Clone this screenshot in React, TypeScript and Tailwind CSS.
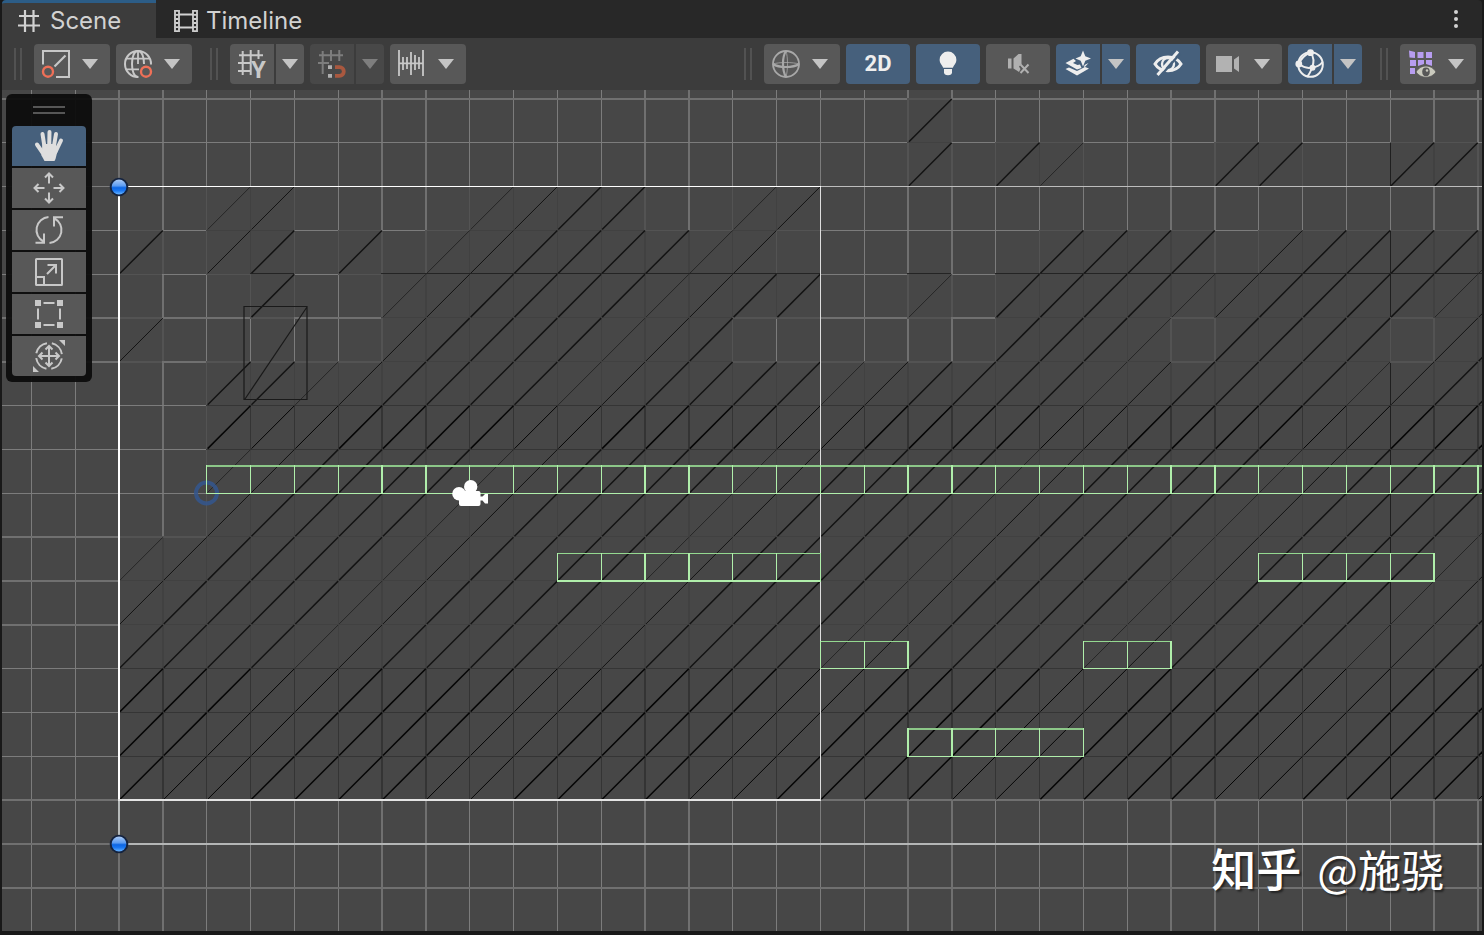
import type { ReactNode } from "react";

const CELL = 43.83;
const ORIGIN_X = 119;
const ORIGIN_Y = 99;
const COLS = 31;

/* Occupied tile columns per row, as inclusive ranges. */
const FULL: number[][] = [[0, 31]];
const FROM_TWO: number[][] = [[2, 31]];
const TILE_ROWS: number[][][] = [
  [[18, 18]],
  [[18, 18], [20, 21], [25, 26], [29, 30]],
  [[2, 3], [8, 11], [14, 15]],
  [[0, 0], [2, 3], [5, 5], [7, 14], [21, 24], [26, 31]],
  [[3, 3], [6, 15], [18, 18], [20, 31]],
  [[0, 0], [6, 13], [20, 23], [25, 28], [30, 31]],
  FROM_TWO,
  FROM_TWO,
  FROM_TWO,
  FROM_TWO,
  FULL,
  FULL,
  FULL,
  FULL,
  FULL,
  FULL,
];

const isTile = (c: number, r: number) =>
  (TILE_ROWS[r] ?? []).some(([from, to]) => c >= from && c <= to);

const wideCol = (n: number) => n >= 0 && n % 6 < 2;
const wideRow = (m: number) => [0, 5, 6, 10, 11, 12, 16, 17, 18].includes(m);
const gx = (n: number) => {
  const v = ORIGIN_X + CELL * n;
  return wideCol(n) ? Math.round(v) - 1 : Math.floor(v);
};
const gy = (m: number) => {
  const v = ORIGIN_Y + CELL * m;
  return wideRow(m) ? Math.round(v) - 1 : Math.floor(v);
};

const LIGHT = "#7c7c7c";
const LIGHT_WIDE = "#707070";
const EDGE = "#535353";
const DARK_ROWS = [7, 13, 14, 15];

function GridLines() {
  const out: ReactNode[] = [];
  for (let n = -2; n <= 60; n++) {
    const w = wideCol(n) ? 2 : 1;
    for (let m = -1; m <= 30; m++) {
      const a = isTile(n - 1, m);
      const b = isTile(n, m);
      let fill = w === 2 ? LIGHT_WIDE : LIGHT;
      if (a && b) fill = DARK_ROWS.includes(m) ? "#343434" : "#414141";
      else if (a || b) fill = EDGE;
      if (n === 29 && b) fill = "#1f1f1f";
      out.push(
        <rect key={`v${n}.${m}`} x={gx(n)} y={gy(m)} width={n === 29 && b ? 1 : w} height={gy(m + 1) - gy(m)} fill={fill} />,
      );
    }
  }
  for (let m = 0; m <= 30; m++) {
    const h = wideRow(m) ? 2 : 1;
    for (let n = -3; n <= 60; n++) {
      const a = isTile(n, m - 1);
      const b = isTile(n, m);
      let fill = h === 2 ? LIGHT_WIDE : LIGHT;
      if (a && b) fill = [7, 8, 13, 14, 15].includes(m) ? "#353535" : "#414141";
      else if ((a || b) && m !== 16) fill = EDGE;
      const dark = m === 4 && b;
      out.push(
        <rect
          key={`h${n}.${m}`}
          x={gx(n)}
          y={dark ? gy(m) - 1 : gy(m)}
          width={gx(n + 1) - gx(n)}
          height={a && b ? 1 : h}
          fill={dark ? "#242424" : fill}
        />,
      );
    }
  }
  return <g shapeRendering="crispEdges">{out}</g>;
}

function TileDiagonals() {
  const out: ReactNode[] = [];
  TILE_ROWS.forEach((_, r) => {
    for (let c = 0; c <= COLS; c++) {
      if (!isTile(c, r)) continue;
      const phase = (c + r) % 6;
      const black = DARK_ROWS.includes(r);
      const stroke = phase === 4 && !black ? "#262626" : black ? "#050505" : "#131313";
      const x = ORIGIN_X + CELL * c;
      const y = ORIGIN_Y + CELL * r;
      out.push(
        <line
          key={`${c}.${r}`}
          x1={x + 1}
          y1={y + CELL - 1}
          x2={x + CELL}
          y2={y}
          stroke={stroke}
          strokeWidth={phase === 4 || phase === 5 ? 1 : 1.5}
        />,
      );
    }
  });
  return <g>{out}</g>;
}

const PLATFORMS = [
  { from: 2, to: 32, top: 465, bottom: 493, topH: 2, bottomH: 1 },
  { from: 10, to: 16, top: 553, bottom: 580, topH: 1, bottomH: 2 },
  { from: 26, to: 30, top: 553, bottom: 580, topH: 1, bottomH: 2 },
  { from: 16, to: 18, top: 641, bottom: 668, topH: 1, bottomH: 1 },
  { from: 22, to: 24, top: 641, bottom: 668, topH: 1, bottomH: 1 },
  { from: 18, to: 22, top: 728, bottom: 756, topH: 2, bottomH: 1 },
];

function Colliders() {
  return (
    <g shapeRendering="crispEdges" fill="#b0efab">
      {PLATFORMS.map((p) => {
        const x = gx(p.from);
        const w = gx(p.to) - x;
        return (
          <g key={`${p.from}.${p.top}`}>
            <rect x={x} y={p.top} width={w} height={p.topH} fill={p.topH === 2 ? "#8cc788" : "#94d990"} />
            <rect x={x} y={p.bottom} width={w} height={p.bottomH} />
            {Array.from({ length: p.to - p.from + 1 }, (_, i) => p.from + i).map((n) => (
              <rect key={n} x={gx(n)} y={p.top} width={wideCol(n) ? 2 : 1} height={p.bottom + p.bottomH - p.top} />
            ))}
          </g>
        );
      })}
    </g>
  );
}

function Handle({ x, y }: { x: number; y: number }) {
  return (
    <g>
      <circle cx={x} cy={y} r="9.300" fill="#14233f" />
      <circle cx={x} cy={y} r="7.400" fill="url(#knob)" />
    </g>
  );
}

function SceneCanvas() {
  return (
    <svg className="absolute inset-0 h-full w-full" aria-label="Scene viewport" role="img">
      <defs>
        <linearGradient id="knob" x1="0" y1="0" x2="0" y2="1">
          <stop offset="0" stopColor="#a9c9f5" />
          <stop offset="0.42" stopColor="#5c9cf2" />
          <stop offset="0.55" stopColor="#0d66e4" />
          <stop offset="0.75" stopColor="#1b78f2" />
          <stop offset="1" stopColor="#69b4ff" />
        </linearGradient>
      </defs>
      <g transform="translate(-2 -90)">
        <GridLines />
        <TileDiagonals />
        <g shapeRendering="crispEdges">
          <rect x="119" y="186" width="4000" height="1" fill="#bdbdbd" />
          <rect x="119" y="186" width="702" height="1" fill="#ffffff" />
          <rect x="118" y="187" width="2" height="613" fill="#ffffff" />
          <rect x="118" y="800" width="2" height="44" fill="#b5b9b9" />
          <rect x="118" y="799" width="703" height="2" fill="#e4e4e4" />
          <rect x="820" y="187" width="1" height="613" fill="#dedede" />
          <rect x="118" y="843" width="4000" height="2" fill="#b4b6b6" />
        </g>
        <path d="M244 306.500H307V399.500H244Z M245 399L307 307" fill="none" stroke="#1a1a1a" strokeWidth="1.200" />
        <circle cx="206.500" cy="493" r="10.500" fill="none" stroke="#34578f" strokeOpacity="0.850" strokeWidth="4" />
        <Colliders />
        <g fill="#ffffff">
          <circle cx="459" cy="493.700" r="6.800" />
          <circle cx="470.700" cy="486.700" r="6.700" />
          <rect x="459" y="491" width="21.500" height="15" rx="2" />
          <path d="M480 496.500L482.500 496.500L485 494H488V503.500H485L482.500 500.500H480Z" />
        </g>
        <Handle x={119} y={187} />
        <Handle x={119} y={844} />
      </g>
    </svg>
  );
}

function Icon({ children, className = "text-[#c8c8c8]" }: { children: ReactNode; className?: string }) {
  return (
    <svg
      viewBox="0 0 28 28"
      className={`size-7 shrink-0 overflow-visible ${className}`}
      fill="none"
      stroke="currentColor"
      strokeWidth="2"
      aria-hidden="true"
    >
      {children}
    </svg>
  );
}

function Caret({ className = "text-[#c4c4c4]" }: { className?: string }) {
  return (
    <svg viewBox="0 0 16 10" className={`h-2.5 w-4 shrink-0 ${className}`} fill="currentColor" aria-hidden="true">
      <path d="M0 0H16L8 10Z" />
    </svg>
  );
}

function DropButton({ label, children }: { label: string; children: ReactNode }) {
  return (
    <button aria-label={label} className="flex h-10 items-center gap-3 rounded bg-[#585858] pr-3 pl-2">
      {children}
      <Caret />
    </button>
  );
}

function ToggleButton({ label, on, children }: { label: string; on: boolean; children: ReactNode }) {
  return (
    <button
      aria-label={label}
      aria-pressed={on}
      className={`flex h-10 w-16 items-center justify-center rounded ${on ? "bg-[#46607c]" : "bg-[#585858]"}`}
    >
      {children}
    </button>
  );
}

const splitTone = { on: "bg-[#46607c]", off: "bg-[#585858]", disabled: "bg-[#484848]" };

function SplitButton({ label, tone, children }: { label: string; tone: keyof typeof splitTone; children: ReactNode }) {
  return (
    <div className="flex gap-0.5">
      <button aria-label={label} disabled={tone === "disabled"} className={`flex h-10 w-11 items-center justify-center rounded-l ${splitTone[tone]}`}>
        {children}
      </button>
      <button
        aria-label={`${label} options`}
        disabled={tone === "disabled"}
        className={`flex h-10 w-7 items-center justify-center rounded-r ${splitTone[tone]}`}
      >
        <Caret className={tone === "disabled" ? "text-[#7e7e7e]" : "text-[#c4c4c4]"} />
      </button>
    </div>
  );
}

function Grip() {
  return <div className="mr-[6px] h-8 w-2 shrink-0 border-x-2 border-[#525252]" />;
}

function Toolbar() {
  return (
    <div className="flex h-[52px] items-center justify-between bg-[#3c3c3c] pr-[6px] pl-3" role="toolbar">
      <div className="flex items-center gap-[6px]">
        <Grip />
        <DropButton label="Tool pivot">
          <Icon>
            <path d="M1 14.500V1H27V27H14" />
            <path d="M12.500 16.500L23.500 5.500" strokeWidth="2.200" />
            <circle cx="6" cy="21.700" r="5" stroke="#ee7058" strokeWidth="2.400" />
          </Icon>
        </DropButton>
        <DropButton label="Handle rotation">
          <Icon>
            <path d="M27 14.500A13 13 0 1 0 14.500 27" />
            <path d="M20 14C20 7 18 1 14 1S8 7 8 14S10 27 14 27" />
            <path d="M2.500 8.700H25.500M2 19.300H15M14 1V14" strokeWidth="1.800" />
            <circle cx="22" cy="21.700" r="5" stroke="#ee7058" strokeWidth="2.400" />
          </Icon>
        </DropButton>
        <div className="pl-3">
          <Grip />
        </div>
        <SplitButton label="Grid visibility" tone="off">
          <Icon>
            <path d="M1 5.200H25M0 13H13.500M0 21H13M4.700 1V25M12.700 0V25M20.500 0V9" />
            <text
              x="20.500"
              y="27.500"
              textAnchor="middle"
              fill="currentColor"
              stroke="none"
              className="font-[Roboto,sans-serif] text-[24px] font-bold"
            >
              Y
            </text>
          </Icon>
        </SplitButton>
        <SplitButton label="Grid snapping" tone="disabled">
          <Icon className="text-[#7d7d7d]">
            <path d="M1 5.200H25M0 13H11M4.700 1V24M13 0V11M21.300 0V11" />
            <path d="M17 17.200H21.500A4.300 4.300 0 0 1 21.500 25.800H17" stroke="#a9583f" strokeWidth="3.800" />
            <path d="M10 17.200H14M10 25.800H14" stroke="#b0b0b0" strokeWidth="3.800" />
          </Icon>
        </SplitButton>
        <DropButton label="Increment snapping">
          <Icon>
            <path d="M1 0V26M25 0V26M1 13.300H25M5 7V20M9 7V19M13 2V25M17 5V20M21 7V19" strokeWidth="1.800" />
          </Icon>
        </DropButton>
      </div>

      <div className="flex items-center gap-[6px]">
        <Grip />
        <DropButton label="Draw mode">
          <Icon className="text-[#a8a8a8]">
            <circle cx="14" cy="14" r="13" strokeWidth="1.800" />
            <path d="M14 1C10 7 10 20 14 27M1 14C7 18 21 18 27 14" strokeWidth="2.200" />
            <path d="M14 1C16 7 16 20 14 27M1 14C7 12 21 12 27 14" strokeWidth="0.800" />
          </Icon>
        </DropButton>
        <ToggleButton label="2D" on>
          <span className="font-[Roboto,sans-serif] text-[22px] leading-7 font-bold text-[#eeeeee]">2D</span>
        </ToggleButton>
        <ToggleButton label="Scene lighting" on>
          <Icon className="text-[#eeeeee]">
            <g fill="currentColor" stroke="none">
              <path d="M14 1.500a8.400 8.400 0 0 0-8.400 8.400c0 3.400 2.400 4.800 3.600 7.800h9.600c1.200-3 3.600-4.400 3.600-7.800A8.400 8.400 0 0 0 14 1.500z" />
              <path d="M10 19h8v3.200a4 3 0 0 1-8 0z" />
            </g>
          </Icon>
        </ToggleButton>
        <ToggleButton label="Scene audio" on={false}>
          <Icon className="text-[#b0b0b0]">
            <path d="M4 8.500H7.500V18.500H4Z M9.500 8.500L14.500 4H17.500V14L15 16.500L16.500 19L15 22L9.500 18.500Z" fill="currentColor" stroke="none" />
            <path d="M16.500 14.500L24.500 23M24.500 14.500L16.500 23" />
          </Icon>
        </ToggleButton>
        <SplitButton label="Scene effects" tone="on">
          <Icon className="text-[#eeeeee]">
            <g fill="currentColor" stroke="none">
              <path d="M19 0.500L21.300 6.300L27 8.500L21.300 10.700L19 16.500L16.700 10.700L11.500 8.500L16.700 6.300Z" />
              <path d="M1.500 13L9.500 8.800L12 11L9 13L13.500 15L16 14.500L17.500 18L13 19.500Z M20.500 15L24.500 13L20 18Z" />
              <path d="M1.500 19L5 17.500L13 21L21 17L25 18.500L13 25.500Z" />
            </g>
          </Icon>
        </SplitButton>
        <ToggleButton label="Scene visibility" on>
          <Icon className="text-[#eeeeee]">
            <path d="M1 14C6.500 4.500 21.500 4.500 27 14C21.500 23 6.500 23 1 14Z" strokeWidth="3" />
            <circle cx="14" cy="14" r="6" strokeWidth="2.400" />
            <path d="M26.200 3.500L6 26.500" stroke="#46607c" strokeWidth="2.400" />
            <path d="M24 1.500L3.500 25" strokeWidth="3" />
          </Icon>
        </ToggleButton>
        <DropButton label="Scene camera">
          <Icon className="text-[#b2b2b2]">
            <path d="M2 6H18V22H2Z M20 9.500L25 6V22L20 18.500Z" fill="currentColor" stroke="none" />
          </Icon>
        </DropButton>
        <SplitButton label="Gizmos" tone="on">
          <Icon className="text-[#eeeeee]">
            <circle cx="14.500" cy="14.500" r="12.300" />
            <path d="M14.500 2C18 7 18 13 16 18C14 23 13 25 11 26.500M14.500 2C7 6 4 10 3 14C8 18 12 18.500 16 17.500C20 17 24 15.500 26.500 12" />
            <g fill="currentColor" stroke="none">
              <circle cx="14.500" cy="2.700" r="3.400" />
              <circle cx="2.800" cy="14" r="3.400" />
              <circle cx="16.500" cy="17.800" r="3" />
            </g>
          </Icon>
        </SplitButton>
        <div className="pl-3">
          <Grip />
        </div>
        <DropButton label="Tilemap focus">
          <Icon>
            <g fill="#b79df0" stroke="none">
              <path d="M1 0.500L7 2V8L1.500 7.500Z M9.500 2H15.500V8H9.500Z M18 2H24V8H18Z" />
              <path d="M2 10H8V16H2Z M10 10H16V14L10 16Z M18 10H24V16L18 14Z M2 18H7V24H2Z" />
            </g>
            <path d="M8 22C12.500 14 23.500 14 28 22C23.500 29 12.500 29 8 22Z" fill="#c9c9bd" stroke="#585858" strokeWidth="0.800" />
            <ellipse cx="18" cy="21.800" rx="3.800" ry="4.400" fill="#585858" stroke="none" />
            <circle cx="19" cy="20.500" r="1.200" fill="#c9c9bd" stroke="none" />
          </Icon>
        </DropButton>
      </div>
    </div>
  );
}

const arrows =
  "M14 9.500V0M10 3.500L14 -0.500L18 3.500M14 18.500V28M10 24.500L14 28.500L18 24.500M9.500 14H0M3.500 10L-0.500 14L3.500 18M18.500 14H28M24.500 10L28.500 14L24.500 18";

const TOOLS: { label: string; icon: ReactNode }[] = [
  {
    label: "Hand",
    icon: (
      <Icon className="text-[#dedede]">
        <path
          d="M7.500 2L9.500 15M14.500 0L14.200 15M21 2L18.800 15M26 8.500L20.500 20M2 12.500L8.500 22"
          strokeWidth="4"
          strokeLinecap="round"
        />
        <path d="M7.500 12H20.500L23 17L20.500 27L19.500 29H9.500L6.500 23.500Z" fill="currentColor" stroke="none" />
      </Icon>
    ),
  },
  { label: "Move", icon: <Icon><path d={arrows} /></Icon> },
  {
    label: "Rotate",
    icon: (
      <Icon>
        <path d="M13.500 1A13 13 0 0 0 8.500 25.500M9 17.500V26.700H0.500M14.500 27A13 13 0 0 0 19.500 2.500M19 10.500V1.300H28" />
      </Icon>
    ),
  },
  {
    label: "Scale",
    icon: (
      <Icon>
        <rect x="1" y="1" width="26" height="26" rx="0.500" />
        <path d="M1 19H9V27M12 16L20.500 7.500M12.500 7H21V15.500" />
      </Icon>
    ),
  },
  {
    label: "Rect",
    icon: (
      <Icon>
        <path d="M0 0H6V6H0Z M22 0H28V6H22Z M0 22H6V28H0Z M22 22H28V28H22Z" fill="currentColor" stroke="none" />
        <path d="M8.500 3H19.500M8.500 25H19.500M3 8.500V19.500M25 8.500V19.500" />
      </Icon>
    ),
  },
  {
    label: "Transform",
    icon: (
      <Icon>
        <circle cx="14" cy="14" r="13" strokeDasharray="15.420 5" strokeDashoffset="-2.500" />
        <path d="M14 4V24M4 14H24M10.500 7.500L14 4L17.500 7.500M10.500 20.500L14 24L17.500 20.500M7.500 10.500L4 14L7.500 17.500M20.500 10.500L24 14L20.500 17.500" />
        <path d="M24 -2H30V4Z M-2 24L4 30H-2Z" fill="currentColor" stroke="none" />
      </Icon>
    ),
  },
];

function ToolPalette() {
  return (
    <div className="absolute top-1 left-1 rounded-md bg-[#0d0d0d]/95 p-[6px]">
      <div className="flex h-[26px] justify-center pt-[6px]">
        <div className="h-2 w-8 border-y-2 border-[#565656]" />
      </div>
      <div className="flex flex-col gap-0.5 overflow-hidden rounded">
        {TOOLS.map((tool, i) => (
          <button
            key={tool.label}
            aria-label={tool.label}
            aria-pressed={i === 0}
            className={`flex h-10 w-[74px] items-center justify-center ${i === 0 ? "bg-[#46607c]" : "bg-[#585858]"}`}
          >
            {tool.icon}
          </button>
        ))}
      </div>
    </div>
  );
}

function TabBar() {
  return (
    <div className="flex h-[38px] items-stretch rounded-t bg-[#282828] text-2xl text-[#d2d2d2]" role="tablist">
      <button role="tab" aria-selected="true" className="flex w-[154px] items-center gap-2.5 rounded-tl border-t-3 border-[#2c5d87] bg-[#3c3c3c] pl-4">
        <svg viewBox="0 0 22 22" className="size-[22px]" fill="none" stroke="currentColor" strokeWidth="2.200" aria-hidden="true">
          <path d="M1 6H21M0 15.500H22M7 0V22M15.500 0V22" />
        </svg>
        Scene
      </button>
      <button role="tab" aria-selected="false" className="flex items-center gap-2 pt-[3px] pl-[18px]">
        <svg viewBox="0 0 24 22" className="h-[22px] w-6" fill="none" stroke="currentColor" aria-hidden="true">
          <path d="M5 4.500H19M5 17.500H19" strokeWidth="2" />
          <path d="M1 0V22M5 0V22M19 0V22M23 0V22" strokeWidth="1.800" />
          <path d="M3 0V22M21 0V22" strokeWidth="3" strokeDasharray="1.800 2.240" />
        </svg>
        Timeline
      </button>
      <button aria-label="More options" className="mr-4 ml-auto flex w-5 flex-col items-center justify-center gap-[3px]">
        <span className="size-1 rounded-full bg-[#d2d2d2]" />
        <span className="size-1 rounded-full bg-[#d2d2d2]" />
        <span className="size-1 rounded-full bg-[#d2d2d2]" />
      </button>
    </div>
  );
}

export default function App() {
  return (
    <div className="flex min-h-screen flex-col bg-[#191919] px-0.5 pb-1 font-[Inter,sans-serif]">
      <TabBar />
      <Toolbar />
      <main className="relative flex-1 overflow-hidden bg-[#474747]">
        <SceneCanvas />
        <ToolPalette />
        <div className="absolute right-[38px] bottom-7 flex items-center gap-4 font-['Noto_Sans_CJK_SC',sans-serif] text-[43px] leading-[70px] whitespace-nowrap text-white [text-shadow:2px_2px_2px_rgb(0_0_0/0.5)]">
          <span className="text-[45px] font-medium">知乎</span>
          <span>@施骁</span>
        </div>
      </main>
    </div>
  );
}
